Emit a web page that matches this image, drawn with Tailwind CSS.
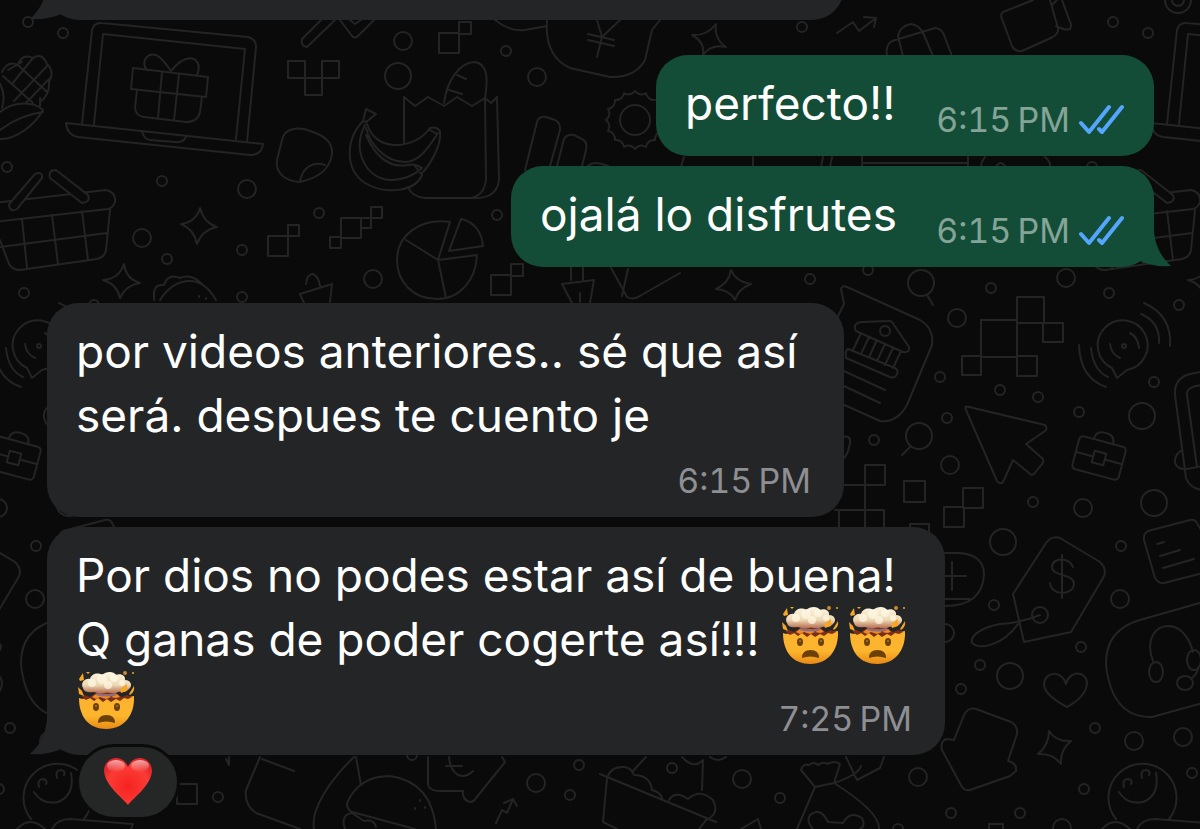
<!DOCTYPE html>
<html lang="es">
<head>
  <meta charset="UTF-8">
  <meta name="viewport" content="width=device-width, initial-scale=1.0">
  <title>Chat</title>
  <script src="https://cdn.jsdelivr.net/npm/@tailwindcss/browser@4"></script>
</head>
<body class="bg-[#0a0a0a] font-['Inter',sans-serif]">

<!-- shared symbols -->
<svg class="absolute size-0" aria-hidden="true">
  <defs>
    <linearGradient id="face" x1="0" y1="0" x2="0" y2="1">
      <stop offset="0" stop-color="#fbb12c"/>
      <stop offset="0.6" stop-color="#fdb52e"/>
      <stop offset="1" stop-color="#e88a14"/>
    </linearGradient>
    <linearGradient id="cloud" x1="0" y1="0" x2="0" y2="1">
      <stop offset="0" stop-color="#fdf6e0"/>
      <stop offset="0.6" stop-color="#ecd9b4"/>
      <stop offset="1" stop-color="#b5674a"/>
    </linearGradient>
    <radialGradient id="red" cx="0.5" cy="0.6" r="0.6">
      <stop offset="0" stop-color="#f5221f"/>
      <stop offset="0.7" stop-color="#fb3b36"/>
      <stop offset="1" stop-color="#e0262a"/>
    </radialGradient>
    <linearGradient id="shine" x1="0" y1="0" x2="0" y2="1">
      <stop offset="0" stop-color="#ffffff" stop-opacity="0.6"/>
      <stop offset="1" stop-color="#ffffff" stop-opacity="0"/>
    </linearGradient>
  </defs>
  <symbol id="mindblown" viewBox="-2 0 60 60">
    <path d="M1 27C6 29 12 27 17 26L41 26C46 28 51 26 56 25C57 44 46 58 28.500 58C11 58 1 46 1 27Z" fill="url(#face)"/>
    <path d="M3 25L8 29L12 27L16 30L20 27L25 31L29 28L33 31L38 28L42 30L46 27L50 28L54 26L49 24L44 26L38 22L18 22L12 26L7 24Z" fill="#7b2f1a"/>
    <path d="M14 26l4-3 5 2 5-2 5 3 6-3 3 3-4 1-5-1-5 2-6-2-4 2z" fill="#f08a26"/>
    <path d="M18 23q10 3 20 0" fill="none" stroke="#8d6f86" stroke-width="2"/>
    <path d="M5 17C2 12 7 7 12 8C13 3 20 1 24 4C28 0 36 0 38 4C43 2 48 5 47 9C53 9 55 15 51 18C48 22 43 20 40 21C36 24 30 21 27 22C22 24 18 21 15 21C10 22 6 21 5 17Z" fill="url(#cloud)"/>
    <g fill="#fff8e6" fill-opacity="0.7">
      <circle cx="14" cy="12" r="4"/>
      <circle cx="24" cy="8" r="5"/>
      <circle cx="36" cy="7" r="4"/>
      <circle cx="30" cy="14" r="4"/>
      <circle cx="44" cy="12" r="3"/>
    </g>
    <path d="M42 18L49 13L49 20L43 22ZM51 23L56 15Q57 21 52 24ZM0 16L4 20L6 25L1 23ZM1 8L5 2L6 9L2 10ZM8 1l4 0-2 2z" fill="#f5a623"/>
    <circle cx="55" cy="2" r="1" fill="#f5a623"/>
    <circle cx="47" cy="2" r="2" fill="#c98a2b"/>
    <ellipse cx="18" cy="36" rx="3" ry="4" fill="#6b4009"/>
    <ellipse cx="39" cy="36" rx="3" ry="4" fill="#6b4009"/>
    <circle cx="18" cy="35" r="1" fill="#a87324"/>
    <circle cx="39" cy="35" r="1" fill="#a87324"/>
    <path d="M20 52Q20 44 28.500 44Q37 44 37 52Q28 49 20 52Z" fill="#6b4009"/>
  </symbol>
  <symbol id="ticks" viewBox="0 0 46 32">
    <path d="M3 19L11 28L31 3M21 25L24 28L44 3" fill="none" stroke="#53a6fb" stroke-width="4" stroke-linecap="round" stroke-linejoin="round"/>
  </symbol>
  <symbol id="tail" viewBox="0 0 40 44">
    <path d="M17 0C18 18 12 32 0 43C12 44 22 42 31 38L40 20L30 0Z" fill="currentColor"/>
  </symbol>
</svg>

<main class="relative min-h-screen overflow-hidden">

  <!-- wallpaper -->
  <svg class="absolute inset-0 h-full w-full" viewBox="0 0 1200 829" preserveAspectRatio="xMinYMin slice" fill="none" stroke="#242424" stroke-width="2" stroke-linecap="round" stroke-linejoin="round" aria-hidden="true">
    <defs>
      <g id="doodles">
        <!-- small dots -->
        <g>
          <circle cx="28" cy="22" r="5"/><circle cx="63" cy="33" r="5"/><circle cx="7" cy="167" r="5"/><circle cx="162" cy="181" r="5"/>
          <circle cx="319" cy="213" r="5"/><circle cx="167" cy="259" r="5"/><circle cx="242" cy="250" r="5"/><circle cx="24" cy="293" r="5"/>
          <circle cx="242" cy="297" r="5"/><circle cx="506" cy="51" r="5"/><circle cx="497" cy="215" r="5"/><circle cx="802" cy="27" r="5"/>
          <circle cx="868" cy="270" r="5"/><circle cx="810" cy="279" r="5"/><circle cx="991" cy="288" r="5"/><circle cx="1179" cy="305" r="5"/><circle cx="940" cy="377" r="5"/>
          <circle cx="1000" cy="390" r="5"/><circle cx="1038" cy="397" r="5"/><circle cx="1154" cy="382" r="5"/><circle cx="1079" cy="412" r="5"/>
          <circle cx="947" cy="418" r="5"/><circle cx="874" cy="440" r="5"/><circle cx="1033" cy="502" r="5"/><circle cx="994" cy="605" r="5"/>
          <circle cx="1121" cy="546" r="5"/><circle cx="1081" cy="647" r="5"/><circle cx="980" cy="665" r="5"/><circle cx="961" cy="689" r="5"/>
          <circle cx="1095" cy="728" r="5"/><circle cx="1084" cy="789" r="5"/><circle cx="1192" cy="773" r="5"/><circle cx="951" cy="813" r="5"/>
          <circle cx="1020" cy="813" r="5"/><circle cx="898" cy="829" r="5"/><circle cx="218" cy="797" r="5"/><circle cx="412" cy="755" r="5"/>
          <circle cx="579" cy="765" r="5"/><circle cx="570" cy="795" r="5"/><circle cx="672" cy="768" r="5"/><circle cx="780" cy="798" r="5"/>
        </g>
        <!-- bigger dots -->
        <g>
          <circle cx="247" cy="189" r="9"/><circle cx="142" cy="238" r="9"/><circle cx="373" cy="279" r="9"/><circle cx="403" cy="41" r="9"/>
          <circle cx="537" cy="77" r="9"/><circle cx="957" cy="318" r="9"/><circle cx="1066" cy="278" r="9"/><circle cx="950" cy="465" r="9"/>
          <circle cx="1083" cy="508" r="9"/><circle cx="1120" cy="599" r="9"/><circle cx="1134" cy="741" r="9"/><circle cx="1183" cy="737" r="9"/>
          <circle cx="918" cy="777" r="9"/><circle cx="1062" cy="828" r="9"/><circle cx="536" cy="783" r="9"/><circle cx="742" cy="779" r="9"/>
          <circle cx="945" cy="633" r="9"/>
          <circle cx="398" cy="76" r="13"/><circle cx="1142" cy="416" r="13"/><circle cx="1154" cy="503" r="13"/><circle cx="1003" cy="542" r="13"/>
          <circle cx="1010" cy="676" r="13"/>
        </g>
        <!-- sparkles -->
        <path d="M200 208Q204 223 217 227Q202 230 197 244Q194 229 181 224Q196 222 200 208Z"/>
        <path d="M124 264Q126 279 140 283Q126 285 120 298Q117 284 103 280Q119 279 124 264Z"/>
        <path d="M716 24Q714 39 726 47Q711 44 703 55Q705 42 692 35Q707 36 716 24Z"/>
        <path d="M731 270Q736 282 751 284Q738 289 735 300Q730 290 716 289Q729 283 731 270Z"/>
        <path d="M1049 731Q1056 742 1071 741Q1060 750 1061 764Q1053 753 1038 754Q1049 745 1049 731Z"/>
        <path d="M758 819L741 829M758 819L761 829"/>
        <!-- laptop with a gift -->
        <path d="M82 124L92 30Q94 22 102 23L248 37Q256 39 256 47L247 142M94 124L103 34L245 49L236 139"/>
        <path d="M66 123L263 144Q262 155 250 155L78 137Q67 135 66 123ZM142 132Q145 140 150 140L175 142Q183 143 186 137"/>
        <path d="M133 68L208 77L206 97L131 89ZM171 71C160 55 155 53 150 55C143 58 143 66 147 70M171 71C180 60 188 57 194 59C201 63 199 70 197 75M162 72L158 118M179 74L174 120M137 90L135 108Q136 116 144 117L186 122Q198 122 200 112L202 97"/>
        <!-- corn -->
        <path d="M0 112C15 100 35 102 43 110C35 125 15 140 0 139M0 130Q20 115 43 112M2 72Q8 60 18 65Q22 53 33 58Q42 52 47 64Q55 72 49 82Q50 95 40 102M18 65L47 92M3 76L33 103M33 58L12 84M47 66L14 101M49 79L26 103M8 70L22 62M40 98V106"/>
        <path d="M0 84Q6 95 2 108"/>
        <!-- pixels -->
        <path d="M288 61h17v17h-17zM322 61h17v17h-17zM305 78h17v17h-17zM439 33h20v20h-20zM459 22h12v12h-12zM491 275h20v20h-20zM511 264h12v12h-12zM268 236h20v20h-20zM288 225h11v11h-11zM330 237h11v11h-11zM341 218h20v20h-20zM361 218h10v10h-10zM371 207h11v11h-11z"/>
        <path d="M981 320h36v37h-36zM1017 297h27v26h-27zM1043 323h20v19h-20zM962 356h19v19h-19zM1017 356h20v20h-20zM1017 297v60M865 465h20v20h-20zM904 481h21v21h-21zM963 488h20v20h-20zM944 507h20v20h-20zM910 524h19v19h-19zM844 485H865V528M835 510H884V528M839 510V528M177 784h20v20h-20zM989 824h14v5M989 824v5"/>
        <!-- scissors and check mark -->
        <path d="M325 16L302 39Q300 46 307 47L335 20M340 20L352 36Q355 39 358 36L374 20M350 20l5 4l6 -4"/>
        <!-- peach -->
        <path d="M282 140C284 130 294 127 304 129C325 135 333 142 332 154C330 170 318 178 300 182C284 181 275 172 277 160ZM300 182C302 168 312 161 325 165"/>
        <!-- bananas -->
        <path d="M363 121C345 140 345 170 365 183C385 195 415 192 422 175M365 125C352 150 365 178 390 180C407 180 418 172 422 168Q414 163 408 165C390 168 376 158 366 135M363 121L366 109L376 114L366 122ZM367 124C372 140 385 146 400 145C415 143 425 135 430 128Q436 126 440 131C442 145 430 165 422 173M366 128C370 144 385 162 405 162C420 162 430 145 438 133M430 130l7 4M415 166l6 8"/>
        <!-- shopping bag and bread -->
        <path d="M404 144V97L415 106L428 97L444 106L457 97L472 106L485 98L491 103L497 97L499 180Q497 197 478 198H425Q412 197 408 187M485 98L486 180Q484 196 470 198M444 103C447 80 460 62 475 62C488 64 488 80 485 98M457 75l9 4M449 90l13 4"/>
        <!-- basket -->
        <path d="M-15 204L106 190Q116 192 115 202Q113 208 108 209L-15 223M110 210L106 250Q105 257 97 259L20 270Q12 270 9 264L0 240M0 247L107 233M22 219L27 268M52 215L58 264M82 211L88 260"/>
        <path d="M10 203L35 174Q43 171 42 178L17 209Q10 213 9 205ZM50 178Q48 170 56 170L88 195Q91 202 82 203Z" fill="#0a0a0a"/>
        <!-- cookie -->
        <path d="M154 300V292Q155 284 164 285Q168 273 180 278Q192 273 203 285M160 300Q172 281 190 281Q205 281 216 300M199 296v1M206 298v1"/>
        <!-- cone and party hat -->
        <path d="M306 284Q307 274 313 274Q319 277 320 286M300 294L332 284L330 302M300 294L304 303M571 266V280M583 266V280M562 284L594 280L590 303M562 284L572 303M580 293v9M610 266L627 297Q632 300 638 297L680 273M622 296L628 269"/>
        <!-- money bag -->
        <path d="M547 20C545 45 553 60 570 68L610 77Q635 78 645 60L652 30L660 20M495 20Q510 32 525 30L547 26M597 20L602 37L597 57M602 37L620 20M588 34l26 6M588 40l26 6"/>
        <!-- gear -->
        <circle cx="635" cy="120" r="15"/>
        <path d="M664 120A8 8 0 0 0 662 131A8 8 0 0 0 655 140A8 8 0 0 0 646 147A8 8 0 0 0 635 149A8 8 0 0 0 624 147A8 8 0 0 0 615 140A8 8 0 0 0 608 131A8 8 0 0 0 606 120A8 8 0 0 0 608 109A8 8 0 0 0 615 100A8 8 0 0 0 624 93A8 8 0 0 0 635 91A8 8 0 0 0 646 93A8 8 0 0 0 655 100"/>
        <!-- bars -->
        <path d="M525 170L537 122Q539 116 546 117L555 120Q561 123 560 130L550 166M557 166L564 139Q567 134 574 135L582 139Q588 142 586 150L582 166M588 166Q594 160 608 166"/>
        <!-- pie chart -->
        <path d="M450 222C420 218 397 235 397 260C397 282 413 299 437 299C460 299 476 280 477 255L438 260ZM438 260L406 240M438 260L446 298M461 219C475 222 482 233 483 246L449 251Z"/>
        <!-- trend arrow, shopping bags, camera -->
        <path d="M837 33L853 22L859 31L876 18M864 17L876 18L874 27M887 56Q885 45 892 41L935 28Q941 28 944 35L952 56M903 56L898 36Q900 26 911 24Q920 25 924 35L933 56"/>
        <path d="M1033 0L1003 12Q1000 14 1002 19L1012 46Q1015 52 1022 51L1053 37Q1059 33 1058 28L1050 0M1056 26Q1066 31 1070 29Q1072 25 1070 22L1062 0M1052 5l5 -5"/>
        <circle cx="1178" cy="0" r="13"/><circle cx="1178" cy="0" r="6"/>
        <path d="M684 157L681 167M753 167v-10M823 157l-2 10M832 157l-2 10M862 157v10M968 157v10M862 163H968M985 157q-4 5 -4 10M1045 157q6 5 5 10M996 167q4 -8 10 0"/>
        <!-- document with a bank -->
        <path d="M838 316L844 304L841 289Q842 285 847 287L920 320Q934 328 932 345L907 405Q897 423 880 421L840 403M844 371l41 19M844 386l36 17"/>
        <path d="M856 331Q852 323 862 322L888 321Q891 320 894 325L909 347Q910 353 903 352ZM848 349L895 368Q899 371 897 374Q895 379 890 377L846 358Q845 350 848 349M861 333l-8 17M869 337l-8 17M877 340l-8 17M885 344l-8 17M893 348l-8 17M901 351l-8 17"/>
        <circle cx="885" cy="331" r="5"/>
        <!-- magnifiers -->
        <circle cx="921" cy="283" r="13"/><circle cx="919" cy="436" r="13"/>
        <path d="M927 295l6 10M911 446l-9 9M843 437q8 -2 7 6q-2 12 -7 16"/>
        <!-- broadcast -->
        <path d="M1112 368A25 25 0 1 1 1127 370L1117 378ZM1110 344Q1111 354 1120 358M1130 333Q1138 337 1139 348M1079 345Q1080 378 1106 387M1091 348Q1093 370 1108 377M1144 303Q1172 315 1170 346M1141 314Q1160 322 1159 343"/>
        <circle cx="1124" cy="346" r="2"/>
        <!-- cursor -->
        <path d="M966 410Q964 405 969 407L1045 425Q1048 428 1045 431L1026 444L1043 459Q1044 462 1042 464L1034 474Q1031 476 1029 473L1013 460L1003 482Q1000 485 997 481Z"/>
        <!-- briefcase -->
        <g transform="translate(1099 458) rotate(15)">
          <rect x="-24" y="-17" width="48" height="34" rx="4"/>
          <rect x="-6" y="-6" width="12" height="12"/>
          <path d="M-10 -17q0 -9 10 -9q10 0 10 9M-24 0H-6M6 0H24"/>
        </g>
        <!-- phone -->
        <path d="M1205 371L1190 374Q1174 378 1175 395L1186 478Q1190 489 1203 490M1203 385Q1186 386 1187 395L1197 467M1182 450Q1174 455 1175 463Q1178 470 1187 469l16 -3"/>
        <!-- game pad -->
        <path d="M945 553H958Q984 554 984 575Q982 606 945 606M945 576H966M952 562V590M945 599H970"/>
        <!-- price tag -->
        <path d="M1013 594L1046 543Q1052 535 1060 538L1100 562Q1108 570 1103 578L1071 632L1024 642ZM1040 615Q1020 623 1000 624C980 628 970 636 972 643C980 650 1002 646 1018 624M1073 567C1070 557 1052 557 1052 567C1052 577 1074 573 1074 584C1073 596 1051 596 1050 583M1062 555V598"/>
        <circle cx="1040" cy="615" r="8"/>
        <!-- note -->
        <path d="M1203 533L1198 525Q1196 519 1190 520L1148 531Q1143 534 1144 540L1155 578Q1159 584 1164 583L1203 573M1157 544l7 -2M1160 556l20 -6M1163 568l31 -9"/>
        <!-- headset -->
        <path d="M1224 596L1140 620Q1105 630 1106 665Q1112 718 1152 717L1224 697M1153 661C1145 640 1155 626 1168 626C1182 626 1190 640 1193 652M1192 678q5 -4 6 -9"/>
        <ellipse cx="1156" cy="672" rx="7" ry="10"/><ellipse cx="1194" cy="660" rx="7" ry="10"/><ellipse cx="1185" cy="683" rx="8" ry="7"/>
        <!-- heart and mitten -->
        <path d="M1067 707C1050 698 1044 690 1044 684C1045 671 1062 670 1066 684C1069 670 1087 670 1087 684C1086 692 1080 700 1067 707Z"/>
        <path d="M954 740L964 715Q968 707 976 709L1011 722Q1018 726 1017 734L1008 761Q1017 763 1016 771L1010 776L970 790Q965 791 962 787L942 750Q940 742 946 739Z"/>
        <!-- smiling face -->
        <path d="M1116 819A34 34 0 1 1 1169 819M1119 792Q1127 805 1143 802Q1160 795 1156 773M1124 787q-2 -8 4 -8q5 1 3 5M1142 778q-2 -8 4 -8q5 1 3 5M1102 829Q1115 815 1130 829M1137 829Q1142 819 1155 819L1218 824L1216 829"/>
        <!-- bottom row -->
        <path d="M226 759l3 6v-8M260 757L246 790Q244 805 256 813L300 829M262 759l32 12M354 757C330 780 310 810 314 829M356 757l5 28"/>
        <path d="M352 812Q345 808 348 801Q360 776 390 776Q432 782 436 829M352 812L415 829M345 829Q340 815 352 813l12 8q10 -2 12 6M420 800v1M415 808v1M425 807v1"/>
        <path d="M428 757V785Q430 791 440 791H463Q462 800 470 802Q474 802 476 798L505 762L502 757M473 771Q466 778 458 775Q450 770 449 757M446 766h16M496 823L502 810L507 813L513 799M504 803l9 -4l4 7"/>
        <path d="M600 774L716 822M607 778L603 822L617 829M607 778Q611 766 624 767Q632 768 634 775Q650 775 652 790Q660 792 662 798M632 772l14 -15M669 800Q675 790 688 799Q700 788 713 800Q720 814 706 820l-7 9M703 760l-1 30M682 757Q694 770 703 760M710 757q8 6 16 0"/>
        <path d="M815 787L801 770Q803 763 809 765q5 -4 9 0q6 -4 9 -1q8 -4 13 0L834 783ZM815 787L797 829M834 783Q880 812 879 829M834 783Q858 775 861 766M846 757L857 780L880 768L884 757M813 829Q806 822 810 815Q820 806 828 822L843 823Q850 810 862 818Q866 826 860 829"/>
      </g>
    </defs>
    <use href="#doodles"/>
    <use href="#doodles" x="1085"/>
    <use href="#doodles" x="-1085"/>
  </svg>

  <div class="relative flex flex-col gap-[10px] pl-[47px] pr-[46px] text-[46px] leading-[64px] text-white">

    <!-- end of an earlier message -->
    <div class="relative -mt-11 h-16 w-[797px] max-w-full rounded-[32px] bg-[#242527]">
      <svg class="absolute bottom-0 -left-[17px] h-11 w-10 text-[#242527]" aria-hidden="true"><use href="#tail"/></svg>
    </div>

    <!-- sent -->
    <div class="mt-[25px] flex items-end justify-between self-end w-[498px] max-w-full rounded-[32px] bg-[#144d37] pt-4 pr-[30px] pb-4 pl-[29px]">
      <p class="mb-[5px]">perfecto!!</p>
      <div class="flex items-center gap-2 text-[34px] leading-10 text-[#84a497] tabular-nums">
        <time>6:15&#8201;PM</time>
        <svg class="h-8 w-[46px]" role="img" aria-label="Leído"><use href="#ticks"/></svg>
      </div>
    </div>

    <div class="relative flex items-end justify-between self-end w-[643px] max-w-full rounded-[32px] bg-[#144d37] pt-4 pr-[30px] pb-4 pl-[29px]">
      <p class="mb-[5px]">ojalá lo disfrutes</p>
      <div class="flex items-center gap-2 text-[34px] leading-10 text-[#84a497] tabular-nums">
        <time>6:15&#8201;PM</time>
        <svg class="h-8 w-[46px]" role="img" aria-label="Leído"><use href="#ticks"/></svg>
      </div>
      <svg class="absolute bottom-0 -right-[17px] h-11 w-10 -scale-x-100 text-[#144d37]" aria-hidden="true"><use href="#tail"/></svg>
    </div>

    <!-- received -->
    <div class="mt-[26px] w-[797px] max-w-full rounded-[32px] bg-[#242527] pt-4 pr-[33px] pb-4 pl-[29px]">
      <p>por videos anteriores.. sé que así<br>será. despues te cuento je</p>
      <time class="mt-[14px] block text-right text-[34px] leading-10 text-[#8e8f92] tabular-nums">6:15&#8201;PM</time>
    </div>

    <div class="relative w-[898px] max-w-full rounded-[32px] bg-[#242527] pt-4 pr-[33px] pb-4 pl-[29px]">
      <p class="whitespace-nowrap">Por dios no podes estar así de buena!<br>Q ganas de poder cogerte así!!!
        <span class="ml-2 inline-flex gap-[7px] -mt-3 align-[-10px]">
          <svg class="size-[60px]" role="img" aria-label="Cabeza explotando"><use href="#mindblown"/></svg>
          <svg class="size-[60px]" role="img" aria-label="Cabeza explotando"><use href="#mindblown"/></svg>
        </span>
      </p>
      <div class="flex items-end justify-between">
        <svg class="mb-2 size-[60px]" role="img" aria-label="Cabeza explotando"><use href="#mindblown"/></svg>
        <time class="text-[34px] leading-10 text-[#8e8f92] tabular-nums">7:25&#8201;PM</time>
      </div>
      <svg class="absolute bottom-0 -left-[17px] h-11 w-10 text-[#242527]" aria-hidden="true"><use href="#tail"/></svg>

      <!-- reaction -->
      <button type="button" aria-label="Reacción: corazón" class="absolute top-[217px] left-[29px] flex h-[76px] w-[104px] items-center justify-center rounded-full border-[3px] border-[#0a0a0a] bg-[#242726]">
        <svg class="h-12 w-12" viewBox="0 0 48 48" aria-hidden="true">
          <path d="M24 47C20 41 1 28 0 13C0 5 6 0 12 0C18 0 22 4 24 9C26 4 30 0 36 0C42 0 48 5 48 13C47 28 28 41 24 47Z" fill="url(#red)"/>
          <ellipse cx="12" cy="8" rx="9" ry="6" fill="url(#shine)"/>
          <ellipse cx="36" cy="8" rx="9" ry="6" fill="url(#shine)"/>
        </svg>
      </button>
    </div>
  </div>
</main>

</body>
</html>
